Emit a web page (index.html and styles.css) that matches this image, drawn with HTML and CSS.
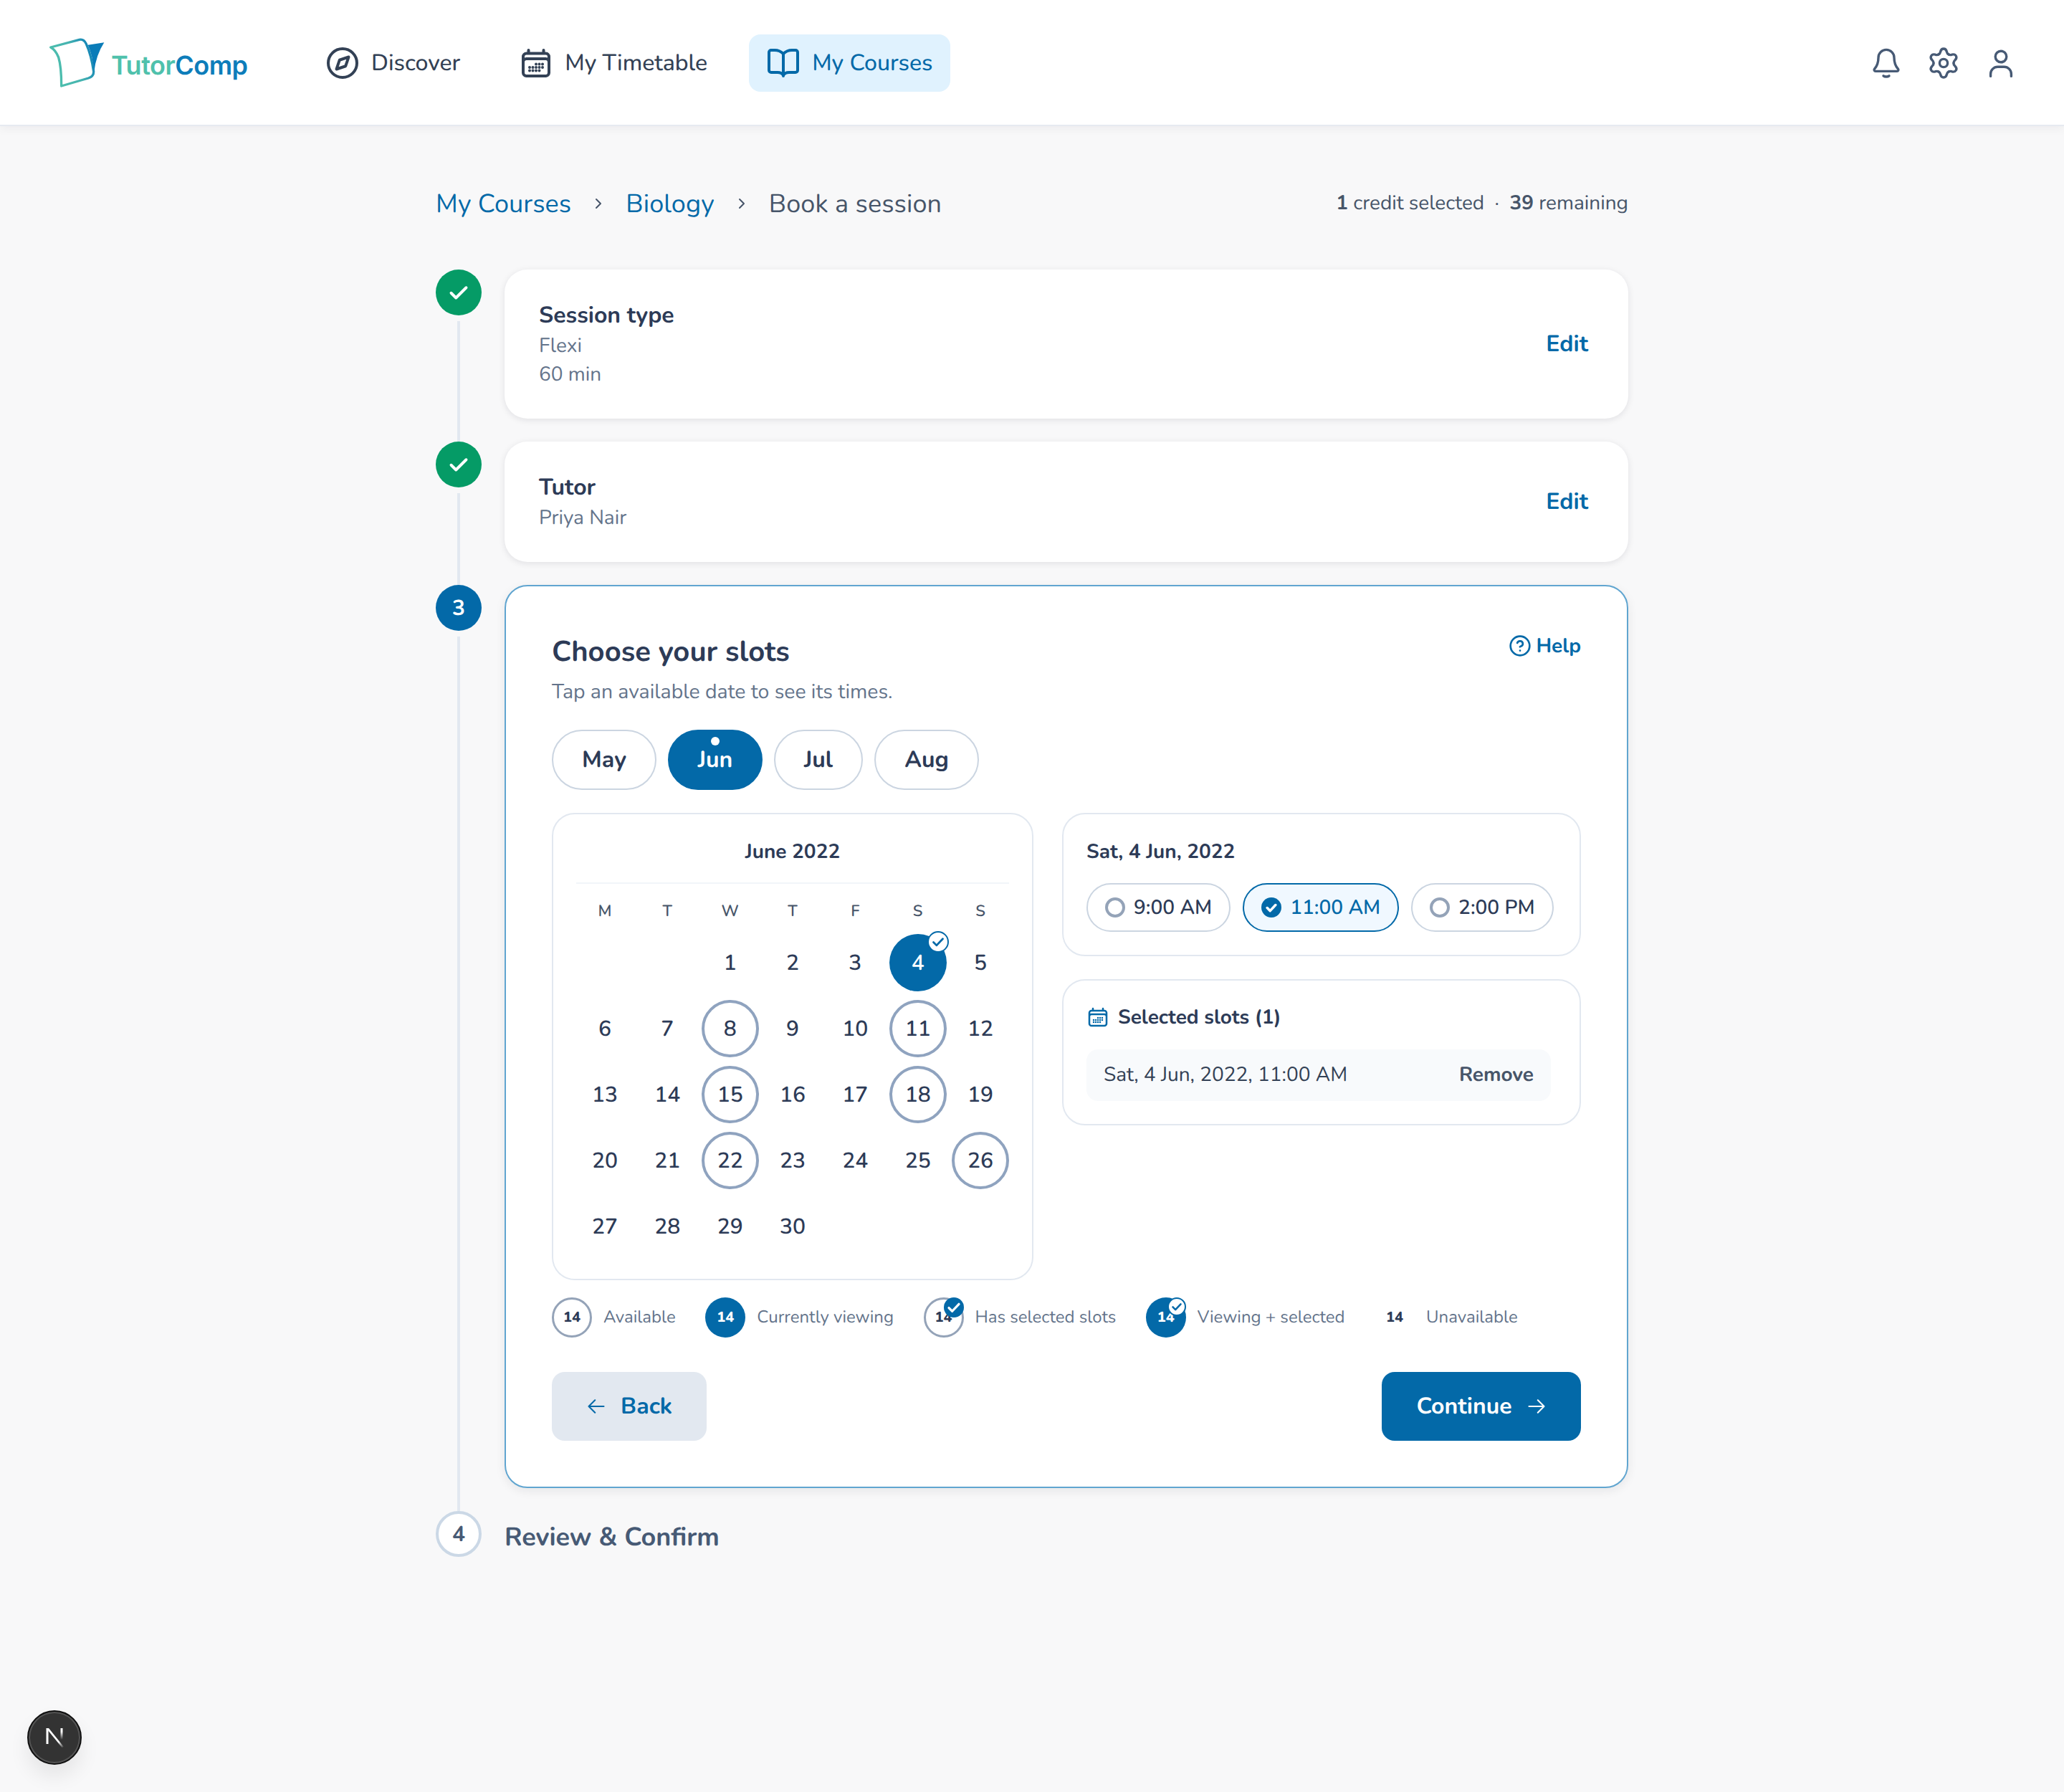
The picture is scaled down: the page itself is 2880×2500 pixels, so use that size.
FILE: index.html
```html
<!DOCTYPE html>
<html lang="en">
<head>
<meta charset="utf-8">
<title>Book a session</title>
<link rel="stylesheet" href="styles.css">
</head>
<body>
<header class="topbar">
  <a class="logo">
    <svg class="logo-mark" viewBox="84 60 240 228" aria-hidden="true">
      <defs>
        <linearGradient id="lg" gradientUnits="userSpaceOnUse" x1="90" y1="200" x2="280" y2="130"><stop offset="0" stop-color="#4fc1ac"/><stop offset="0.55" stop-color="#45b3b0"/><stop offset="1" stop-color="#0a7cb8"/></linearGradient>
      </defs>
      <path d="M92 108 L212 76 Q230 72 240 92 Q262 140 272 210 Q272 230 250 237 L137 270 Q137 190 125 150 Q112 118 92 108Z" fill="none" stroke="url(#lg)" stroke-width="10"/>
      <path d="M248 98 L316 88 Q282 140 274 210 Q268 140 248 98Z" fill="#0a7cb8"/>
    </svg>
    <span class="logo-text"><span class="logo-a">Tutor</span><span class="logo-b">Comp</span></span>
  </a>
  <nav class="nav">
    <a class="nav-item"><svg class="nav-icon" viewBox="0 0 24 24"><circle cx="12" cy="12" r="10"/><path d="M16.240 7.760 14.120 14.120 7.760 16.240 9.880 9.880Z"/></svg><span>Discover</span></a>
    <a class="nav-item"><svg class="nav-icon" viewBox="0 0 24 24"><path d="M6.750 3v2.250M17.250 3v2.250M3 18.750V7.500a2.250 2.250 0 0 1 2.250-2.250h13.500A2.250 2.250 0 0 1 21 7.500v11.250m-18 0A2.250 2.250 0 0 0 5.250 21h13.500A2.250 2.250 0 0 0 21 18.750m-18 0v-7.500A2.250 2.250 0 0 1 5.250 9h13.500A2.250 2.250 0 0 1 21 11.250v7.500m-9-6h.008v.008H12v-.008ZM12 15h.008v.008H12V15Zm0 2.250h.008v.008H12v-.008ZM9.750 15h.008v.008H9.750V15Zm0 2.250h.008v.008H9.750v-.008ZM7.500 15h.008v.008H7.500V15Zm0 2.250h.008v.008H7.500v-.008Zm6.750-4.500h.008v.008h-.008v-.008Zm0 2.250h.008v.008h-.008V15Zm0 2.250h.008v.008h-.008v-.008Zm2.250-4.500h.008v.008H16.500v-.008Zm0 2.250h.008v.008H16.500V15Z"/></svg><span>My Timetable</span></a>
    <a class="nav-item active"><svg class="nav-icon" viewBox="0 0 24 24"><path d="M12 5.500C10.500 4 8.500 3 6 3H3.500A1.500 1.500 0 0 0 2 4.500V17a1.500 1.500 0 0 0 1.500 1.500H8c1.800 0 3.200.6 4 2 .8-1.400 2.200-2 4-2h4.500A1.500 1.500 0 0 0 22 17V4.500A1.500 1.500 0 0 0 20.500 3H18c-2.500 0-4.500 1-6 2.500Zm0 0V21"/></svg><span>My Courses</span></a>
  </nav>
  <div class="tools">
    <svg class="tool" viewBox="0 0 24 24"><path d="M6.500 8.200a5.500 5.500 0 0 1 11 0c0 3.800.8 5.600 2.700 7.900.5.600.2 1.600-.7 1.600h-15c-.9 0-1.200-1-.7-1.600 1.900-2.300 2.700-4.100 2.700-7.900Z"/><path d="M10 20.900c1 .8 3 .8 4 0"/></svg>
    <svg class="tool" viewBox="0 0 24 24">
      <path d="M8.500 5.940c1-.4 1.100-1 1.300-1.900C10.100 2.800 10.900 2 12 2s1.900.8 2.200 2.040c.2.9.3 1.500 1.300 1.900"/><path d="M8.500 5.940c1-.4 1.100-1 1.300-1.900C10.100 2.800 10.900 2 12 2s1.900.8 2.200 2.040c.2.9.3 1.500 1.300 1.900" transform="rotate(60 12 12)"/><path d="M8.500 5.940c1-.4 1.100-1 1.300-1.900C10.100 2.800 10.900 2 12 2s1.900.8 2.200 2.040c.2.9.3 1.500 1.300 1.900" transform="rotate(120 12 12)"/><path d="M8.500 5.940c1-.4 1.100-1 1.300-1.900C10.100 2.800 10.900 2 12 2s1.900.8 2.200 2.040c.2.9.3 1.500 1.300 1.900" transform="rotate(180 12 12)"/><path d="M8.500 5.940c1-.4 1.100-1 1.300-1.900C10.100 2.800 10.900 2 12 2s1.900.8 2.200 2.040c.2.9.3 1.500 1.300 1.900" transform="rotate(240 12 12)"/><path d="M8.500 5.940c1-.4 1.100-1 1.300-1.900C10.100 2.800 10.900 2 12 2s1.900.8 2.200 2.040c.2.9.3 1.500 1.300 1.900" transform="rotate(300 12 12)"/>
      <circle cx="12" cy="12" r="2.800"/>
    </svg>
    <svg class="tool" viewBox="0 0 24 24"><circle cx="12" cy="7.500" r="3.900"/><path d="M4.800 21.200v-1.600a5 5 0 0 1 5-5h4.400a5 5 0 0 1 5 5v1.600"/></svg>
  </div>
</header>

<main class="page">
  <div class="crumbs">
    <div class="crumb-trail">
      <a class="crumb-link">My Courses</a>
      <svg class="crumb-sep" viewBox="0 0 24 24"><path d="m9 6 6 6-6 6"/></svg>
      <a class="crumb-link">Biology</a>
      <svg class="crumb-sep" viewBox="0 0 24 24"><path d="m9 6 6 6-6 6"/></svg>
      <span class="crumb-now">Book a session</span>
    </div>
    <div class="credits"><b>1</b> credit selected &nbsp;·&nbsp; <b>39</b> remaining</div>
  </div>

  <section class="step">
    <div class="rail">
      <div class="dot done"><svg viewBox="0 0 24 24"><path d="m5 12.500 4.500 4.500L19 7.500"/></svg></div>
      <div class="line"></div>
    </div>
    <div class="card card-done tall">
      <div>
        <div class="card-title">Session type</div>
        <div class="card-sub">Flexi</div>
        <div class="card-sub">60 min</div>
      </div>
      <a class="edit">Edit</a>
    </div>
  </section>

  <section class="step">
    <div class="rail">
      <div class="dot done"><svg viewBox="0 0 24 24"><path d="m5 12.500 4.500 4.500L19 7.500"/></svg></div>
      <div class="line"></div>
    </div>
    <div class="card card-done short">
      <div>
        <div class="card-title">Tutor</div>
        <div class="card-sub">Priya Nair</div>
      </div>
      <a class="edit">Edit</a>
    </div>
  </section>

  <section class="step">
    <div class="rail">
      <div class="dot current">3</div>
      <div class="line"></div>
    </div>
    <div class="card card-active">
      <div class="active-head">
        <div>
          <h2 class="active-title">Choose your slots</h2>
          <p class="active-sub">Tap an available date to see its times.</p>
        </div>
        <a class="help"><svg viewBox="0 0 24 24"><circle cx="12" cy="12" r="10"/><path d="M9.090 9a3 3 0 0 1 5.830 1c0 2-3 3-3 3"/><path d="M12 17h.01"/></svg><span>Help</span></a>
      </div>

      <div class="months">
        <button class="month m-may">May</button>
        <button class="month m-jun on">Jun</button>
        <button class="month m-jul">Jul</button>
        <button class="month m-aug">Aug</button>
      </div>

      <div class="columns">
        <div class="panel calendar">
          <div class="cal-title">June 2022</div>
          <div class="cal-grid weekdays">
            <span>M</span><span>T</span><span>W</span><span>T</span><span>F</span><span>S</span><span>S</span>
          </div>
          <div class="cal-grid days">
            <span></span><span></span>
            <span class="day">1</span><span class="day">2</span><span class="day">3</span>
            <span class="day view">4<i class="tick-white"><svg viewBox="0 0 24 24"><path d="m6 12.500 4 4L18 8"/></svg></i></span>
            <span class="day">5</span>
            <span class="day">6</span><span class="day">7</span><span class="day avail">8</span><span class="day">9</span><span class="day">10</span><span class="day avail">11</span><span class="day">12</span>
            <span class="day">13</span><span class="day">14</span><span class="day avail">15</span><span class="day">16</span><span class="day">17</span><span class="day avail">18</span><span class="day">19</span>
            <span class="day">20</span><span class="day">21</span><span class="day avail">22</span><span class="day">23</span><span class="day">24</span><span class="day">25</span><span class="day avail">26</span>
            <span class="day">27</span><span class="day">28</span><span class="day">29</span><span class="day">30</span>
          </div>
        </div>

        <div class="side">
          <div class="panel times">
            <div class="panel-title">Sat, 4 Jun, 2022</div>
            <div class="chips">
              <button class="chip"><i class="radio"></i>9:00 AM</button>
              <button class="chip sel"><i class="radio-on"><svg viewBox="0 0 24 24"><path d="m7 12.500 3.500 3.500L17 9"/></svg></i>11:00 AM</button>
              <button class="chip"><i class="radio"></i>2:00 PM</button>
            </div>
          </div>
          <div class="panel selected">
            <div class="sel-head">
              <svg class="sel-icon" viewBox="0 0 24 24"><path d="M6.750 3v2.250M17.250 3v2.250M3 18.750V7.500a2.250 2.250 0 0 1 2.250-2.250h13.500A2.250 2.250 0 0 1 21 7.500v11.250m-18 0A2.250 2.250 0 0 0 5.250 21h13.500A2.250 2.250 0 0 0 21 18.750m-18 0v-7.500A2.250 2.250 0 0 1 5.250 9h13.500A2.250 2.250 0 0 1 21 11.250v7.500m-9-6h.008v.008H12v-.008ZM12 15h.008v.008H12V15Zm0 2.250h.008v.008H12v-.008ZM9.750 15h.008v.008H9.750V15Zm0 2.250h.008v.008H9.750v-.008ZM7.500 15h.008v.008H7.500V15Zm0 2.250h.008v.008H7.500v-.008Zm6.750-4.500h.008v.008h-.008v-.008Zm0 2.250h.008v.008h-.008V15Zm0 2.250h.008v.008h-.008v-.008Zm2.250-4.500h.008v.008H16.500v-.008Zm0 2.250h.008v.008H16.500V15Z"/></svg>
              <span>Selected slots (1)</span>
            </div>
            <div class="sel-row"><span>Sat, 4 Jun, 2022, 11:00 AM</span><a class="remove">Remove</a></div>
          </div>
        </div>
      </div>

      <div class="legend">
        <div class="leg"><span class="swatch s-avail">14</span><span>Available</span></div>
        <div class="leg"><span class="swatch s-view">14</span><span>Currently viewing</span></div>
        <div class="leg"><span class="swatch s-avail">14<i class="tick-blue"><svg viewBox="0 0 24 24"><path d="m6 12.500 4 4L18 8"/></svg></i></span><span>Has selected slots</span></div>
        <div class="leg"><span class="swatch s-view">14<i class="tick-ring"><svg viewBox="0 0 24 24"><path d="m6 12.500 4 4L18 8"/></svg></i></span><span>Viewing + selected</span></div>
        <div class="leg"><span class="swatch">14</span><span>Unavailable</span></div>
      </div>

      <div class="actions">
        <button class="btn btn-back"><svg viewBox="0 0 24 24"><path d="M10.500 19.500 3 12l7.500-7.500M3 12h18"/></svg>Back</button>
        <button class="btn btn-next">Continue<svg viewBox="0 0 24 24"><path d="M13.500 4.500 21 12l-7.500 7.500M21 12H3"/></svg></button>
      </div>
    </div>
  </section>

  <section class="step last">
    <div class="rail"><div class="dot todo">4</div></div>
    <div class="last-title">Review &amp; Confirm</div>
  </section>
</main>

<div class="dev-badge">
  <svg class="dev-n" viewBox="0 0 26 28" aria-hidden="true">
    <defs>
      <linearGradient id="nd" x1="0" y1="0" x2="1" y2="1"><stop offset="0.7" stop-color="#fff"/><stop offset="1" stop-color="#fff" stop-opacity="0"/></linearGradient>
      <linearGradient id="nr" x1="0" y1="0" x2="0" y2="1"><stop offset="0.3" stop-color="#fff"/><stop offset="1" stop-color="#fff" stop-opacity="0"/></linearGradient>
    </defs>
    <rect x="0.500" y="1" width="3" height="22" fill="#fff"/>
    <polygon points="0.500,1 4,1 25,27 22.500,28" fill="url(#nd)"/>
    <rect x="20.500" y="1" width="3" height="16" fill="url(#nr)"/>
  </svg>
</div>
</body>
</html>
```

FILE: styles.css
```css
* { box-sizing: border-box; }
html, body { margin: 0; padding: 0; }
body {
  min-height: 2500px;
  background: #f8f8f9;
  color: #334155;
  font-family: "Nunito", "Nunito Sans", "Lato", "Noto Sans", sans-serif;
  text-rendering: geometricPrecision;
  position: relative;
}
button { font-family: inherit; cursor: pointer; text-rendering: inherit; }
a { cursor: pointer; }
svg { display: block; fill: none; stroke: currentColor; stroke-linecap: round; stroke-linejoin: round; }

.topbar {
  height: 176px;
  background: #fff;
  border-bottom: 2px solid #e6eaf1;
  box-shadow: 0 4px 12px rgba(15, 23, 42, .05);
  display: flex;
  align-items: center;
  padding: 2px 64px 0 68px;
}
.logo { display: flex; align-items: center; width: 362px; height: 80px; flex: none; }
.logo-mark { width: 80px; height: 76px; flex: none; stroke: none; }
.logo-text { font-family: "Inter", sans-serif; font-weight: 600; font-size: 36px; letter-spacing: -.5px; margin: 6px 0 0 7px; line-height: 44px; }
.logo-a { color: #4fc1ac; }
.logo-b { color: #0d7dba; }

.nav { display: flex; align-items: center; gap: 34px; flex: 1; }
.nav-item { display: flex; align-items: center; gap: 16px; height: 80px; padding: 0 24px; border-radius: 16px; font-size: 32px; font-weight: 500; color: #334155; }
.nav-icon { width: 48px; height: 48px; stroke-width: 2; }
.active { background: #e0f2fe; color: #0369a8; }
.tools { display: flex; gap: 32px; color: #475a75; }
.tool { width: 48px; height: 48px; stroke-width: 1.7; }

.page { width: 1664px; margin: 0 auto; padding-top: 82px; }
.crumbs { display: flex; justify-content: space-between; align-items: center; height: 52px; margin-bottom: 66px; }
.crumb-trail { display: flex; align-items: center; gap: 26px; font-size: 36px; letter-spacing: .1px; }
.crumb-link { color: #0369a8; }
.crumb-now { color: #475569; }
.crumb-sep { width: 24px; height: 24px; color: #475569; stroke-width: 2; }
.credits { font-size: 28px; color: #475569; padding-bottom: 2px; }
.credits b { font-weight: 700; }

.step { display: grid; grid-template-columns: 64px 1fr; column-gap: 32px; padding-bottom: 32px; }
.rail { display: flex; flex-direction: column; align-items: center; }
.line { width: 4px; flex: 1; background: #e2e8f0; margin-top: 8px; margin-bottom: -32px; }
.dot { width: 64px; height: 64px; border-radius: 50%; flex: none; display: flex; align-items: center; justify-content: center; font-size: 30px; font-weight: 700; color: #fff; }
.dot svg { width: 36px; height: 36px; stroke-width: 2.6; }
.done { background: #059b66; }
.current { background: #0369a8; }
.todo { background: #fff; border: 4px solid #cbd8e6; color: #475a75; }

.card { background: #fff; border-radius: 32px; box-shadow: 0 2px 10px rgba(15, 23, 42, .1); }
.card-done { display: flex; justify-content: space-between; align-items: center; padding: 0 56px 0 48px; }
.tall { height: 208px; }
.short { height: 168px; }
.card-title { font-size: 32px; font-weight: 700; line-height: 42px; padding-top: 2px; color: #2d3b57; }
.card-sub { font-size: 28px; line-height: 40px; color: #64748b; }
.edit { font-size: 32px; font-weight: 700; color: #0369a8; }

.card-active { border: 2px solid #60a5d0; padding: 64px 64px 64px; box-shadow: 0 4px 14px rgba(15, 23, 42, .08); }
.active-head { display: flex; justify-content: space-between; align-items: flex-start; }
.active-title { margin: 0; font-size: 40px; line-height: 56px; font-weight: 700; color: #2d3b57; }
.active-sub { margin: 8px 0 0; font-size: 28.4px; line-height: 40px; color: #64748b; }
.help { display: flex; align-items: center; gap: 6px; font-size: 28px; font-weight: 700; color: #0369a8; }
.help svg { width: 32px; height: 32px; stroke-width: 2; }

.months { display: flex; gap: 16px; margin-top: 32px; }
.month { position: relative; height: 84px; border: 2px solid #cbd5e1; border-radius: 42px; background: #fff; font-size: 32px; font-weight: 700; color: #2d3b57; padding: 0; }
.m-may { width: 146px; }
.m-jun { width: 132px; }
.m-jul { width: 124px; }
.m-aug { width: 146px; }
.on { background: #0369a8; border-color: #0369a8; color: #fff; }
.on::before { content: ""; position: absolute; left: 50%; top: 8px; width: 12px; height: 12px; margin-left: -6px; border-radius: 50%; background: #fff; }

.columns { display: grid; grid-template-columns: 672px 724px; column-gap: 40px; margin-top: 32px; align-items: start; }
.panel { background: #fff; border: 2px solid #e2e8f0; border-radius: 32px; padding: 32px; }
.calendar { height: 652px; padding-top: 32px; }
.cal-title { text-align: center; font-size: 28px; font-weight: 700; line-height: 40px; height: 65px; border-bottom: 2px solid #f1f5f9; color: #2d3b57; }
.cal-grid { display: grid; grid-template-columns: repeat(7, 80px); justify-content: space-between; }
.weekdays { height: 70px; align-items: center; text-align: center; font-size: 22px; font-weight: 600; color: #475569; padding-top: 6px; }
.days { row-gap: 12px; }
.day { position: relative; width: 80px; height: 80px; border-radius: 50%; display: flex; align-items: center; justify-content: center; font-size: 30px; font-weight: 650; color: #2d3b57; }
.avail { border: 4px solid #8fa3bf; }
.view { background: #0369a8; color: #fff; }
.tick-white { position: absolute; top: -4px; right: -3px; width: 30px; height: 30px; border-radius: 50%; background: #fff; border: 2px solid #0369a8; color: #0369a8; }
.tick-white svg { width: 26px; height: 26px; stroke-width: 2.6; }

.side { display: flex; flex-direction: column; gap: 32px; }
.times { height: 200px; padding-top: 32px; }
.panel-title { font-size: 28px; font-weight: 700; line-height: 40px; color: #2d3b57; }
.chips { display: flex; gap: 17px; margin-top: 24px; }
.chip { display: flex; align-items: center; gap: 12px; height: 68px; padding: 0 24px; border: 2px solid #cbd5e1; border-radius: 34px; background: #fff; font-size: 28px; font-weight: 600; color: #2d3b57; white-space: nowrap; flex: none; }
.radio { width: 28px; height: 28px; border-radius: 50%; border: 4px solid #94a3b8; background: #fff; flex: none; }
.radio-on { width: 28px; height: 28px; border-radius: 50%; background: #0369a8; color: #fff; flex: none; }
.radio-on svg { width: 28px; height: 28px; stroke-width: 3; }
.sel { background: #f0f8ff; border-color: #0369a8; color: #0369a8; }

.selected { height: 204px; padding-top: 31px; }
.sel-head { display: flex; align-items: center; gap: 12px; font-size: 28px; font-weight: 700; line-height: 40px; color: #2d3b57; }
.sel-icon { width: 32px; height: 32px; color: #0369a8; stroke-width: 1.9; }
.sel-row { display: flex; justify-content: space-between; align-items: center; height: 72px; margin: 25px 8px 0 0; padding: 0 24px 2px; border-radius: 16px; background: #f8fafc; font-size: 28px; color: #334155; }
.remove { font-weight: 700; color: #475569; }

.legend { display: flex; gap: 41.5px; margin-top: 24px; }
.leg { display: flex; align-items: center; gap: 16px; font-size: 24px; color: #64748b; }
.swatch { position: relative; width: 56px; height: 56px; flex: none; border-radius: 50%; display: flex; align-items: center; justify-content: center; font-size: 20px; font-weight: 800; color: #2d3b57; }
.s-avail { border: 3.5px solid #94a3b8; }
.s-view { background: #0369a8; color: #fff; }
.tick-blue { position: absolute; top: -3.5px; right: -3.5px; width: 28px; height: 28px; border-radius: 50%; background: #0369a8; color: #fff; }
.tick-blue svg { width: 28px; height: 28px; stroke-width: 2.8; }
.tick-ring { position: absolute; top: 0; right: 0; width: 26px; height: 26px; border-radius: 50%; background: #fff; border: 2px solid #0369a8; color: #0369a8; }
.tick-ring svg { width: 22px; height: 22px; stroke-width: 2.8; }

.actions { display: flex; justify-content: space-between; margin-top: 48px; }
.btn { display: flex; align-items: center; justify-content: center; height: 96px; gap: 20px; border: 0; border-radius: 18px; font-size: 32px; font-weight: 700; }
.btn svg { width: 28px; height: 28px; stroke-width: 1.8; }
.btn-back { width: 216px; background: #e2e8f0; color: #0369a8; }
.btn-next { width: 278px; background: #0369a8; color: #fff; }

.last { padding-bottom: 0; }
.last-title { font-size: 36px; font-weight: 700; color: #475a75; line-height: 74px; }

.dev-badge { position: absolute; left: 38px; top: 2386px; width: 76px; height: 76px; border-radius: 50%; background: #333; border: 2px solid #111; box-shadow: inset 0 0 0 2px #555, 0 16px 28px rgba(0, 0, 0, .08); display: flex; align-items: center; justify-content: center; }
.dev-n { width: 26px; height: 28px; stroke: none; margin-left: 1px; }
```
